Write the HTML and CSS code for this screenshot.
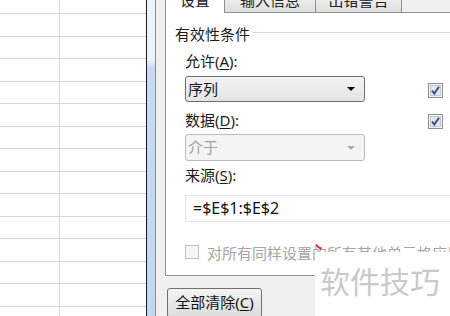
FILE: index.html
```html
<!DOCTYPE html>
<html>
<head>
	<meta charset="utf-8">
	<title>数据有效性</title>
	<link rel="stylesheet" href="styles.css">
</head>
<body>
	<div class="screen">
		<div class="sheet">
			<div class="row first"><div class="cell a"></div><div class="cell"></div></div>
			<div class="row"><div class="cell a"></div><div class="cell"></div></div>
			<div class="row"><div class="cell a"></div><div class="cell"></div></div>
			<div class="row"><div class="cell a"></div><div class="cell"></div></div>
			<div class="row"><div class="cell a"></div><div class="cell"></div></div>
			<div class="row"><div class="cell a"></div><div class="cell"></div></div>
			<div class="row"><div class="cell a"></div><div class="cell"></div></div>
			<div class="row"><div class="cell a"></div><div class="cell"></div></div>
			<div class="row"><div class="cell a"></div><div class="cell"></div></div>
			<div class="row"><div class="cell a"></div><div class="cell"></div></div>
			<div class="row"><div class="cell a"></div><div class="cell"></div></div>
			<div class="row"><div class="cell a"></div><div class="cell"></div></div>
			<div class="row"><div class="cell a"></div><div class="cell"></div></div>
			<div class="row"><div class="cell a"></div><div class="cell"></div></div>
			<div class="row"><div class="cell a"></div><div class="cell"></div></div>
		</div>
		<div class="frame"></div>
		<div class="dialog">
			<div class="tabs">
				<div class="tab active">设置</div>
				<div class="tab t2">输入信息</div>
				<div class="tab t3">出错警告</div>
			</div>
			<div class="panel">
				<div class="group-title"><span>有效性条件</span><i class="rule"></i></div>
				<div class="group">
					<div class="label l1">允许(<u>A</u>):</div>
					<div class="line">
						<div class="combo">序列<span class="arrow"></span></div>
						<span class="check">
							<svg width="15" height="15" viewBox="0 0 15 15"><rect x="0.5" y="0.5" width="14" height="14" fill="#f4f4f4" stroke="#8f8f8f"/><rect x="2.5" y="2.5" width="10" height="10" fill="#e3e8f0" stroke="#c4cad4"/><path d="M4 7.5 L6.3 10.5 L11 3.8" fill="none" stroke="#3b4f86" stroke-width="2"/></svg>
						</span>
					</div>
					<div class="line l2">
						<div class="label">数据(<u>D</u>):</div>
						<span class="check">
							<svg width="15" height="15" viewBox="0 0 15 15"><rect x="0.5" y="0.5" width="14" height="14" fill="#f4f4f4" stroke="#8f8f8f"/><rect x="2.5" y="2.5" width="10" height="10" fill="#e3e8f0" stroke="#c4cad4"/><path d="M4 7.5 L6.3 10.5 L11 3.8" fill="none" stroke="#3b4f86" stroke-width="2"/></svg>
						</span>
					</div>
					<div class="combo off">介于<span class="arrow"></span></div>
					<div class="label l3">来源(<u>S</u>):</div>
					<div class="source">=$E$1:$E$2</div>
					<div class="apply"><span class="box"></span>对所有同样设置的所有其他单元格应用这些更改</div>
				</div>
			</div>
			<div class="footer">
				<div class="btn">全部清除(<u>C</u>)</div>
			</div>
		</div>
		<div class="mark"></div>
		<div class="watermark">软件技巧</div>
	</div>
</body>
</html>
```

FILE: styles.css
```css
body{
	margin: 0;
	background: #fff;
	font-family: "Noto Sans", "Noto Sans CJK SC", sans-serif;
}
.screen{
	position: relative;
	display: flex;
	width: 450px;
	height: 316px;
	overflow: hidden;
}
.sheet{
	width: 146px;
	flex: none;
	border-right: 1px solid #1a1a1a;
	background: #fff;
}
.row{
	display: flex;
	height: 22.5px;
	box-sizing: border-box;
	border-bottom: 1px solid #d6d6d6;
}
.row.first{
	height: 14px;
}
.cell{
	flex: 1;
}
.cell.a{
	flex: none;
	width: 59px;
	border-right: 1px solid #d6d6d6;
}
.frame{
	width: 8px;
	flex: none;
	border-right: 1px solid #8c8c8c;
	background: linear-gradient(to bottom, #eef3fa 0, #eef3fa 60px, #c8daf1 68px, #c3d7ef 100%);
}
.dialog{
	flex: none;
	width: 294px;
	box-sizing: border-box;
	padding-left: 9px;
	background: #f0f0f0;
	color: #1b1b1b;
	font-size: 15px;
}
.tabs{
	display: flex;
	height: 21px;
	margin-top: -9px;
}
.tab{
	box-sizing: border-box;
	height: 21px;
	padding-top: 1px;
	line-height: 14px;
	text-align: center;
	border: 1px solid #8c9097;
	border-bottom: none;
	border-right: none;
	background: linear-gradient(to bottom, #f6f6f6, #dedede);
	color: #222;
}
.tab.active{
	position: relative;
	z-index: 1;
	width: 59px;
	height: 22px;
	margin-bottom: -1px;
	background: #fff;
}
.tab.t2{
	width: 91px;
}
.tab.t3{
	width: 87px;
	border-right: 1px solid #8c9097;
}
.panel{
	height: 264px;
	width: 320px;
	box-sizing: border-box;
	border: 1px solid #8c9097;
	background: #fff;
	padding: 11px 0 0 9px;
}
.group-title{
	display: flex;
	align-items: center;
	height: 20px;
	line-height: 20px;
}
.group-title .rule{
	flex: 1;
	margin-left: 3px;
	margin-top: -3px;
	border-top: 1px solid #d5d8dc;
}
.group{
	padding-left: 10px;
}
.label{
	height: 20px;
	line-height: 20px;
}
.label u, .btn u{
	text-decoration-thickness: 1px;
	text-underline-offset: 2px;
}
.l1{
	margin-top: 7px;
}
.line{
	display: flex;
	align-items: center;
	margin-top: 5px;
}
.line.l2{
	margin-top: 8px;
	width: 258px;
	justify-content: space-between;
}
.check{
	display: block;
	height: 15px;
	margin-left: 63px;
}
.combo{
	position: relative;
	width: 180px;
	height: 26px;
	box-sizing: border-box;
	border: 1px solid #707070;
	border-radius: 3px;
	background: linear-gradient(to bottom, #f3f3f3, #e4e4e4);
	padding-left: 2px;
	line-height: 24px;
	flex: none;
}
.combo .arrow{
	position: absolute;
	right: 9px;
	top: 10px;
	border-left: 4px solid transparent;
	border-right: 4px solid transparent;
	border-top: 4px solid #000;
}
.combo.off{
	margin-top: 4px;
	height: 27px;
	border-color: #b8bcc0;
	background: #f4f4f4;
	color: #a2a2a2;
	line-height: 25px;
}
.combo.off .arrow{
	top: 11px;
	border-top-color: #a8a8a8;
}
.l3{
	margin-top: 4px;
}
.source{
	margin-top: 10px;
	height: 27px;
	width: 300px;
	box-sizing: border-box;
	border: 1px solid #e2e4e7;
	border-right: none;
	padding-left: 7px;
	font-size: 16px;
	line-height: 25px;
	color: #111;
}
.apply{
	display: flex;
	align-items: center;
	margin-top: 20px;
	height: 20px;
	white-space: nowrap;
	color: #a6a6a6;
}
.apply .box{
	width: 14px;
	height: 14px;
	box-sizing: border-box;
	border: 1px solid #c2c2c2;
	background: #f7f7f7;
	margin-right: 8px;
	flex: none;
}
.footer{
	padding: 12px 0 0 2px;
}
.btn{
	width: 95px;
	height: 30px;
	box-sizing: border-box;
	border: 1px solid #707070;
	border-radius: 3px;
	background: linear-gradient(to bottom, #f4f4f4, #dcdcdc);
	text-align: center;
	line-height: 26px;
	color: #111;
}
.mark{
	position: absolute;
	left: 315px;
	top: 246px;
	width: 7px;
	height: 2px;
	background: #d8332b;
	transform: rotate(40deg);
}
.watermark{
	position: absolute;
	left: 315px;
	top: 252px;
	width: 135px;
	height: 64px;
	box-sizing: border-box;
	padding: 9px 0 0 5px;
	background: #fff;
	color: #c9c9c9;
	font-family: "Noto Sans CJK SC", sans-serif;
	font-size: 30px;
	line-height: 38px;
}
```
